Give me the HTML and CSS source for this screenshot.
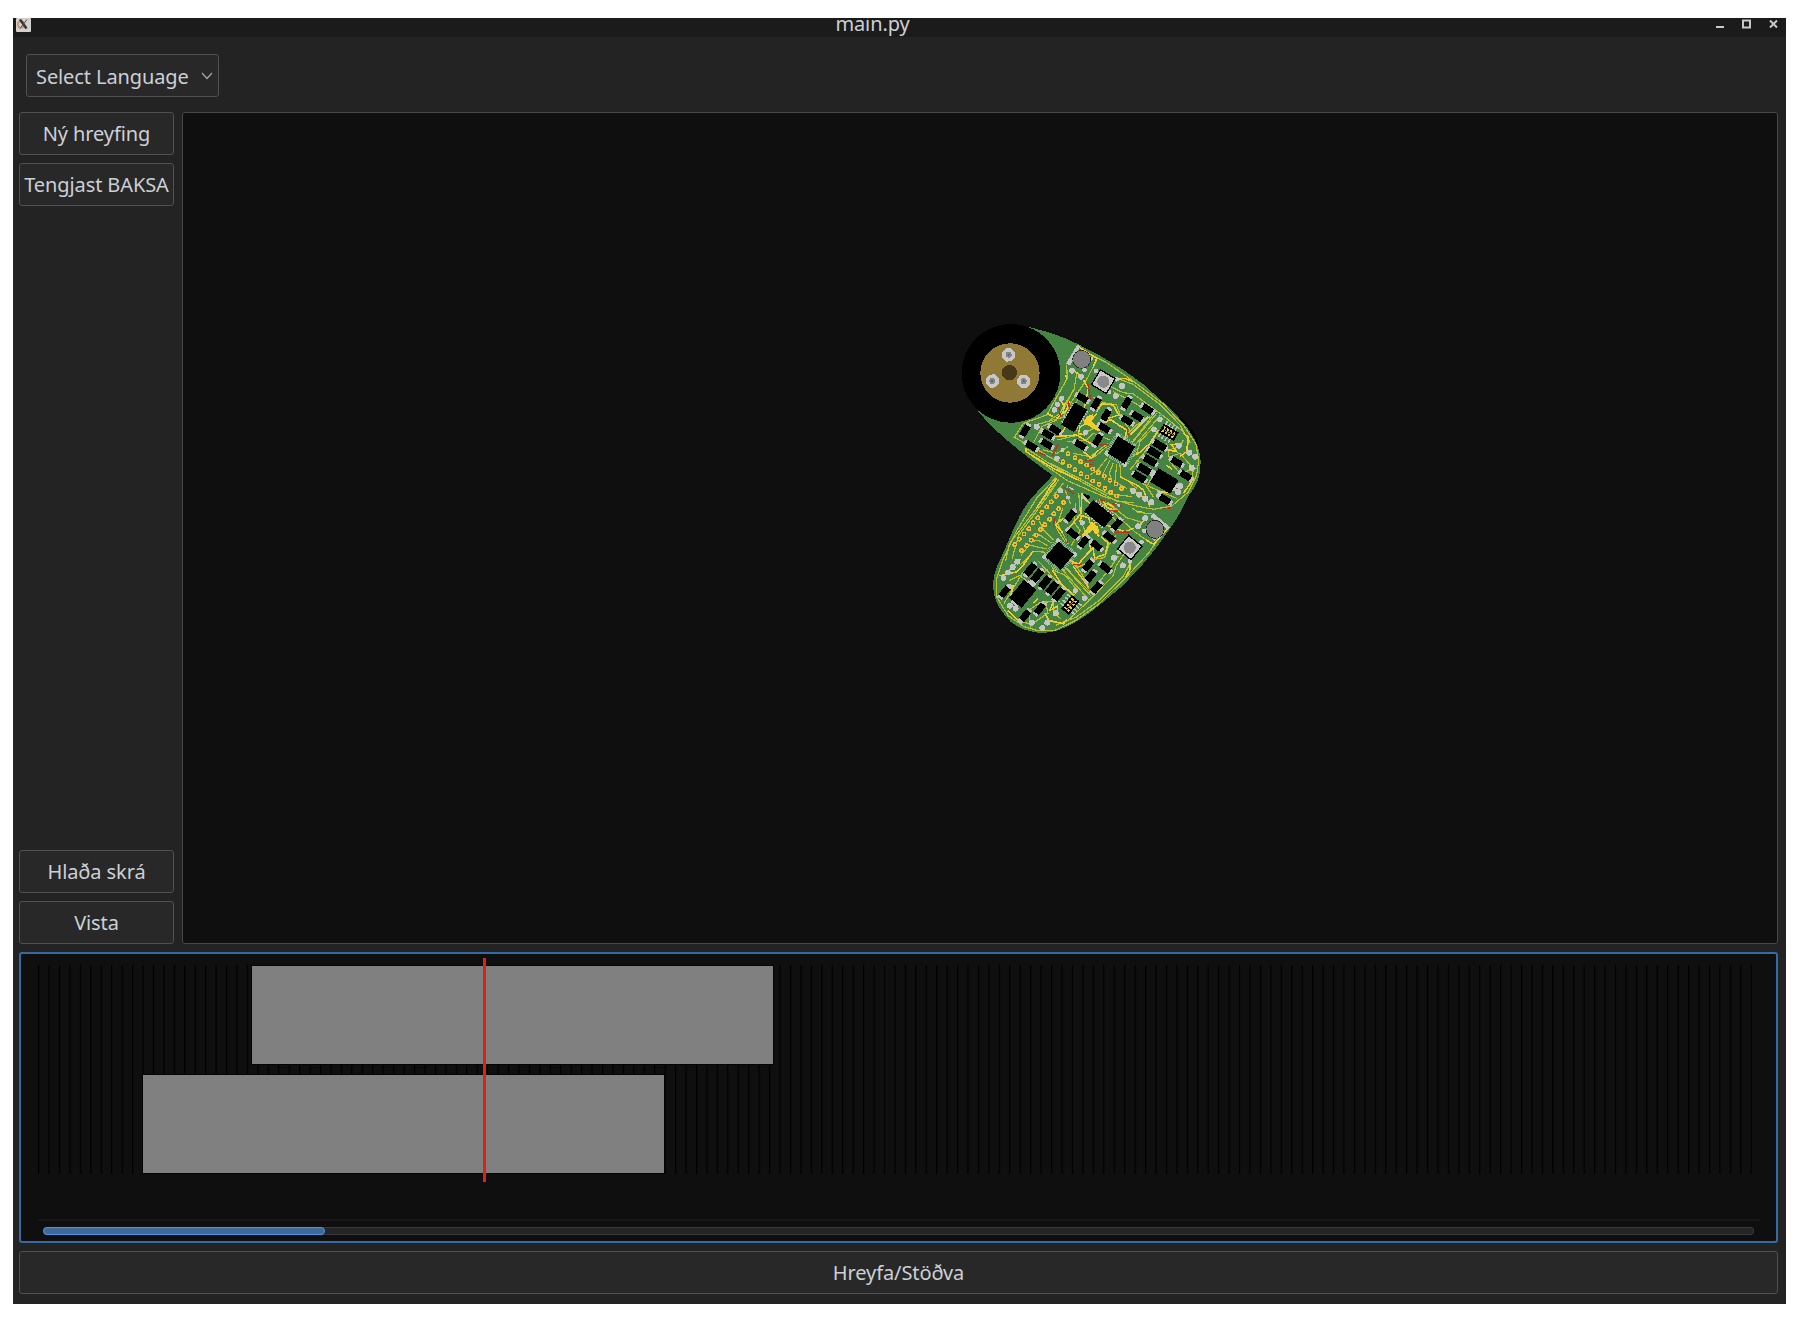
FILE: index.html
```html
<!DOCTYPE html>
<html lang="is">
<head>
<meta charset="utf-8">
<title>main.py</title>
<link rel="stylesheet" href="styles.css">
</head>
<body>
<div class="window">
  <header class="titlebar">
    <svg class="app-icon" width="15" height="14" viewBox="0 0 15 14"><rect width="15" height="14" rx="1" fill="#d3d1cd"/><circle cx="5" cy="6.500" r="3.200" fill="none" stroke="#d98b6c" stroke-width="1.500"/><path d="M4 1.500L10.500 10.500" stroke="#333" stroke-width="2.400"/><path d="M11 1.500L4 10.500" stroke="#555" stroke-width="1"/></svg>
    <span class="title">main.py</span>
    <svg class="controls" width="64" height="12" viewBox="0 0 64 12" fill="none" stroke="#c9c9c9" stroke-width="2"><path d="M1 9H9"/><rect x="28" y="2.500" width="7" height="7"/><path d="M55 2.500L62 9.500M62 2.500L55 9.500"/></svg>
  </header>
  <div class="toolbar">
    <button class="btn select"><span>Select Language</span><svg width="12" height="8" viewBox="0 0 12 8" fill="none" stroke="#a8a8a8" stroke-width="1.200"><path d="M1 1L6 6.500L11 1"/></svg></button>
  </div>
  <main class="workspace">
    <nav class="sidebar">
      <button class="btn">Ný hreyfing</button>
      <button class="btn">Tengjast BAKSA</button>
      <span class="spacer"></span>
      <button class="btn">Hlaða skrá</button>
      <button class="btn">Vista</button>
    </nav>
    <section class="scene">
      <svg class="arm" width="260" height="340" viewBox="0 0 780 1020" shape-rendering="crispEdges">
        <defs>
          <g id="part"><path d="M-25 -8h9v16h-9zM16 -8h9v16h-9z" fill="#c0c2c0"/><rect x="-17" y="-10" width="34" height="20" fill="#000"/></g>
          <g id="res"><path d="M-27 -7h8v14h-8zM19 -7h8v14h-8z" fill="#c0c2c0"/><rect x="-20" y="-11" width="40" height="22" fill="#000"/></g>
          <g id="via"><circle r="7.500" fill="#e8bf2e"/><circle r="2.500" fill="#8a5a20"/></g>
          <g id="screw"><path d="M-20 -5L-9 -19L6 -20L19 -8L20 7L9 19L-7 21L-19 9z" fill="#c8c8c8"/><circle r="9" fill="#858585"/><circle r="3" fill="#666"/></g>
          <g id="board">
            <path fill="#468444" d="M183 42C250 50 330 74 385 103C470 145 565 200 640 277C702 333 752 395 752 455C752 500 740 533 714 557C690 585 655 606 615 606C590 606 570 602 553 595L458 569C410 556 380 544 350 525L285 480C210 425 140 370 85 305z"/>
            <g fill="none" stroke="#b9bf35" stroke-width="3.600">
              <path d="M400 122L470 158L548 212L640 282L700 345L738 402L746 452L740 495L714 547L665 588L612 598L553 587L460 559L352 512L230 426"/>
              <path d="M440 150L412 205L365 275L340 320"/>
              <path d="M380 190L372 240L346 280L330 310L300 330"/>
              <path d="M350 165L352 205L290 315L220 340L193 382L240 408"/>
              <path d="M245 408L290 436L340 465M228 415L310 468L500 574L552 578"/>
              <path d="M300 460L350 485L470 550L545 560M320 390L400 372L455 342L480 300"/>
              <path d="M500 205L548 222L632 285L690 345L715 390L712 425"/>
              <path d="M482 230L520 248L550 252L630 310L700 365L722 400"/>
              <path d="M490 245L535 268L610 312L590 340L550 392"/>
              <path d="M620 310L545 400M632 315L553 408M612 350L570 395L560 430L548 440M625 365L585 425L540 480"/>
              <path d="M470 445L445 478L420 495M480 450L460 490L465 510M490 458L478 490L485 515M500 462L495 515L530 535M510 465L512 500L530 510L560 535"/>
              <path d="M475 400L440 425L420 440L370 430M480 390L455 380L430 370L410 390L350 395M470 410L435 440L410 450"/>
              <path d="M370 240L345 290M390 260L370 290L355 310M430 262L460 278L500 285L512 320L540 360L530 385"/>
              <path d="M656 420L690 410L700 390M660 440L690 430L730 475L725 515M610 495L590 530L610 560M575 520L610 535L680 565"/>
              <path d="M250 400L275 350L320 330M255 345L345 320M280 420L320 430L355 410"/>
              <path d="M520 385L560 345L600 320M560 450L620 500M650 400L660 455L690 490L740 475"/>
            </g>
            <g fill="none" stroke="#f0cc2c" stroke-width="4.500">
              <path d="M345 280L338 310M358 272L350 300L320 325M330 270L345 290M350 345L335 370"/>
              <path d="M400 210L415 235L408 270L400 310L390 330M400 330L450 360M405 340L448 362M440 310L420 335L390 350L385 370L405 375"/>
              <path d="M440 305L455 282L490 285L506 315L475 325L530 360L525 390"/>
              <path d="M465 338L482 328L510 348M470 370L450 345M315 380L380 375L430 405"/>
              <path d="M228 415V425L310 475L385 510"/>
              <path d="M500 208L525 205L550 215M385 110L440 145L430 170"/>
              <path d="M655 420L680 425L665 405L690 400M700 370L715 380L710 425L690 440"/>
              <path d="M560 435L600 400L625 360M540 375L595 320M510 500L560 525L580 540L600 590"/>
              <path d="M375 185L390 195M348 195L350 210M310 320L290 310M400 425L425 445L445 420"/>
              <path d="M725 515L700 550M620 545L660 548M665 478L650 465M540 535L590 570"/>
            </g>
            <path fill="#f0cc2c" d="M412 318l16-5 6 11-10 9 24 22-5 8-43-24z"/>
            <g fill="none" stroke="#b5341c" stroke-width="4"><path d="M413 220L422 267M356 272L358 295M326 292L332 322M325 403L308 437M265 425L288 438M530 350L535 376M450 405L473 403M405 450L430 452M415 464L430 463"/></g>
            <g fill="#c4c6c4">
              <path d="M383 103L391 110L360 167L348 160zM407 135l24 8-6 10-22-8zM620 500l7-11-30-18-6 10z"/>
              <circle cx="366" cy="182" r="9"/><circle cx="393" cy="200" r="9"/><circle cx="404" cy="180" r="7"/><circle cx="438" cy="183" r="7"/>
              <circle cx="335" cy="265" r="8"/><circle cx="322" cy="283" r="8"/><circle cx="313" cy="300" r="8"/><circle cx="260" cy="350" r="9"/>
              <circle cx="516" cy="228" r="9"/><circle cx="500" cy="208" r="7"/><circle cx="497" cy="258" r="9"/><circle cx="478" cy="246" r="7"/>
              <circle cx="630" cy="328" r="8"/><circle cx="612" cy="358" r="8"/><circle cx="687" cy="407" r="9"/><circle cx="718" cy="428" r="9"/><circle cx="736" cy="440" r="9"/><circle cx="725" cy="473" r="9"/>
              <circle cx="321" cy="445" r="8"/><circle cx="338" cy="420" r="6"/><circle cx="407" cy="367" r="8"/>
              <circle cx="550" cy="543" r="9"/><circle cx="568" cy="554" r="9"/><circle cx="586" cy="566" r="9"/><circle cx="604" cy="577" r="9"/><circle cx="690" cy="528" r="9"/><circle cx="684" cy="546" r="9"/><circle cx="722" cy="507" r="9"/><circle cx="628" cy="556" r="9"/>
            </g>
            <use href="#part" transform="translate(397 264) rotate(31)"/><use href="#part" transform="translate(438 280) rotate(-59)"/>
            <use href="#part" transform="translate(530 279) rotate(-59)"/><use href="#part" transform="translate(593 297) rotate(33)"/>
            <use href="#part" transform="translate(562 319) rotate(31)"/><use href="#part" transform="translate(531 331) rotate(31)"/>
            <use href="#part" transform="translate(468 315) rotate(-59)"/><use href="#part" transform="translate(463 354) rotate(31)"/>
            <use href="#part" transform="translate(443 390) rotate(-59)"/><use href="#part" transform="translate(391 405) rotate(31)"/>
            <use href="#part" transform="translate(315 359) rotate(33)"/><use href="#part" transform="translate(293 373) rotate(31)"/>
            <use href="#part" transform="translate(290 402) rotate(31)"/><use href="#part" transform="translate(244 408) rotate(31)"/>
            <use href="#part" transform="translate(225 362) rotate(-59)"/><use href="#part" transform="translate(680 456) rotate(31)"/>
            <use href="#part" transform="translate(707 497) rotate(31)"/><use href="#part" transform="translate(645 568) rotate(31)"/>
            <use href="#res" transform="translate(629 406) rotate(31)"/><use href="#res" transform="translate(613 428) rotate(31)"/><use href="#res" transform="translate(600 452) rotate(31)"/><use href="#res" transform="translate(583 478) rotate(31)"/><use href="#res" transform="translate(568 501) rotate(31)"/>
            <g transform="translate(373 322) rotate(31)"><path d="M-24 -36V36M24 -36V36" stroke="#c0c2c0" stroke-width="6" stroke-dasharray="4 4"/><rect x="-22" y="-39" width="44" height="78"/></g>
            <g transform="translate(514 420) rotate(32)"><path d="M-34 -26V26M34 -26V26M-26 -34H26M-26 34H26" stroke="#8fb894" stroke-width="12" stroke-dasharray="3 3"/><circle cx="-32" cy="-32" r="7" fill="#c4c6c4"/><circle cx="32" cy="32" r="7" fill="#c4c6c4"/><circle cx="-32" cy="32" r="7" fill="#c4c6c4"/><rect x="-30" y="-30" width="60" height="60"/></g>
            <g transform="translate(643 513) rotate(31)"><path d="M-34 -12v24M34 -12v24" stroke="#c4c6c4" stroke-width="16"/><rect x="-35" y="-24" width="70" height="48"/></g>
            <g transform="translate(656 367) rotate(30)"><path d="M-22 -21H22M-22 21H22" stroke="#b4c4b4" stroke-width="13" stroke-dasharray="5 6"/><rect x="-26" y="-15" width="52" height="30"/><path d="M-20 -6H20M-20 6H20" stroke="#f0cc2c" stroke-width="7" stroke-dasharray="6 5"/><path d="M-20 0H20" stroke="#f0cc2c" stroke-width="2"/></g>
            <g transform="translate(460 215) rotate(31)"><rect x="-28" y="-28" width="56" height="56"/><rect x="-24" y="-24" width="48" height="48" fill="#c8c8c8"/><circle r="18" fill="#8a8a8a"/></g>
            <circle cx="395" cy="148" r="28" fill="#222"/><circle cx="395" cy="148" r="26" fill="#808080"/>
            <use href="#via" x="354" y="431"/><use href="#via" x="339" y="455"/><use href="#via" x="375" y="443"/><use href="#via" x="358" y="468"/><use href="#via" x="392" y="455"/><use href="#via" x="375" y="479"/>
            <use href="#via" x="410" y="465"/><use href="#via" x="393" y="491"/><use href="#via" x="428" y="477"/><use href="#via" x="411" y="501"/><use href="#via" x="445" y="488"/><use href="#via" x="428" y="513"/>
            <use href="#via" x="463" y="498"/><use href="#via" x="447" y="523"/><use href="#via" x="480" y="511"/><use href="#via" x="465" y="535"/><use href="#via" x="498" y="522"/><use href="#via" x="482" y="547"/><use href="#via" x="515" y="535"/><use href="#via" x="500" y="558"/>
            <circle cx="183" cy="190" r="148"/><circle cx="180" cy="189" r="89" fill="#8f7935"/><circle cx="178" cy="188" r="23" fill="#46391a"/>
            <use href="#screw" x="176" y="134"/><use href="#screw" x="127" y="213"/><use href="#screw" x="221" y="214"/>
          </g>
        </defs>
        <use href="#board" transform="translate(615 658) rotate(98.200) translate(-395 -148)"/>
        <use href="#board"/>
        <path fill="none" stroke="#c8321c" stroke-width="4" d="M450 570h10M468 575h12M485 582h10M488 603h15M495 667h35M510 588h6M640 596h8M655 594h8"/>
      </svg>
    </section>
  </main>
  <section class="timeline">
    <div class="tracks">
      <svg class="grid" width="1716" height="209"><defs><pattern id="ticks" width="10.443" height="209" patternUnits="userSpaceOnUse"><rect width="1.200" height="209" fill="#000"/></pattern></defs><rect width="1714.500" height="209" fill="url(#ticks)"/></svg>
      <div class="clip first"></div>
      <div class="clip second"></div>
      <div class="playhead"></div>
    </div>
    <div class="scroll"><div class="scrollbar"><div class="thumb"></div></div></div>
  </section>
  <button class="btn play">Hreyfa/Stöðva</button>
</div>
</body>
</html>
```
FILE: styles.css
```css
* {
  box-sizing: border-box;
}

body {
  margin: 0;
  padding: 18px 13px 13px;
  height: 1317px;
  background: #fff;
  font-family: "Noto Sans", sans-serif;
  font-size: 20px;
  letter-spacing: -0.1px;
  color: #ccd0d6;
  overflow: hidden;
}

.window {
  display: flex;
  flex-direction: column;
  width: 1773px;
  height: 1286px;
  background: #232323;
}

.titlebar {
  display: flex;
  flex: 0 0 19px;
  justify-content: space-between;
  align-items: flex-start;
  padding: 0 7px 0 3px;
  background: #1b1b1b;
  overflow: hidden;
}

.title {
  margin-left: -1px;
  line-height: 27px;
  margin-top: -8px;
}

.btn {
  flex: none;
  height: 43px;
  padding: 0;
  border: 1px solid #505050;
  border-radius: 3px;
  background: #282828;
  color: inherit;
  font: inherit;
  letter-spacing: inherit;
  line-height: 27px;
  white-space: nowrap;
}

.toolbar {
  flex: 0 0 75px;
  padding: 17px 12px 0;
}

.select {
  display: flex;
  align-items: center;
  justify-content: space-between;
  width: 193px;
  margin-left: 1px;
  padding: 1px 5px 0 9px;
}

.workspace {
  display: flex;
  flex: 0 0 832px;
  gap: 8px;
  padding: 0 8px 0 6px;
}

.sidebar {
  display: flex;
  flex-direction: column;
  gap: 8px;
  width: 155px;
}

.spacer {
  flex: 1;
}

.scene {
  flex: 1;
  padding: 197px 0 0 767px;
  border: 1px solid #484848;
  border-radius: 3px;
  background: #0f0f0f;
}

.arm {
  display: block;
}

.timeline {
  flex: 0 0 291px;
  margin: 8px 8px 8px 6px;
  padding: 3px 16px 0 17px;
  border: 2px solid #356aa3;
  border-radius: 3px;
  background: #0f0f0f;
}

.tracks {
  position: relative;
  height: 264px;
  padding-top: 8px;
  border-bottom: 2px solid #181818;
}

.grid {
  display: block;
}

.clip {
  position: absolute;
  width: 523px;
  height: 100px;
  border: 1px solid #050505;
  background: #808080;
}

.first {
  left: 213px;
  top: 8px;
}

.second {
  left: 104px;
  top: 117px;
}

.playhead {
  position: absolute;
  left: 445px;
  top: 1px;
  width: 3px;
  height: 224px;
  background: #e02116;
}

.scroll {
  padding: 6px 6px 0 5px;
}

.scrollbar {
  height: 8px;
  border-radius: 4px;
  background: #242526;
  box-shadow: inset 0 0 0 1px #393939;
}

.thumb {
  width: 282px;
  height: 8px;
  border: 1px solid #5294e2;
  border-radius: 4px;
  background: #3d6a98;
}

.play {
  margin: 0 8px 0 6px;
}
```
